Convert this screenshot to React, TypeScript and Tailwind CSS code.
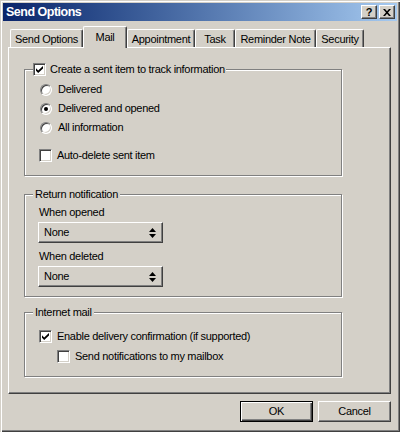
import React from 'react';

const Check = ({ checked = false }: { checked?: boolean }) => (
  <span className="w-[13px] h-[13px] shrink-0 bg-white border border-t-[#808080] border-l-[#808080] border-r-white border-b-white shadow-[inset_1px_1px_0_#404040,inset_-1px_-1px_0_#d4d0c8] flex items-center justify-center">
    {checked && (
      <svg width="7" height="7" viewBox="0 0 7 7">
        <path d="M0 2.2 L2.2 4.4 L7 0 L7 2.6 L2.2 7 L0 4.8 Z" fill="#000" />
      </svg>
    )}
  </span>
);

const Radio = ({ checked = false }: { checked?: boolean }) => (
  <span className="w-[12px] h-[12px] shrink-0 rounded-full bg-white border border-t-[#808080] border-l-[#808080] border-r-white border-b-white shadow-[inset_1px_1px_0_#404040,inset_-1px_-1px_0_#d4d0c8] flex items-center justify-center">
    {checked && <span className="w-[4px] h-[4px] rounded-full bg-black" />}
  </span>
);

const Tab = ({ label, width, active = false }: { label: string; width: string; active?: boolean }) => (
  <div
    className={`${width} ${
      active ? 'h-[22px] -mb-[1px] relative z-10 pt-[4px]' : 'h-[18px] pt-[3px]'
    } bg-[#d4d0c8] border-l border-t border-r border-l-white border-t-white border-r-[#404040] shadow-[inset_-1px_0_0_#808080] rounded-t-[2px] text-center leading-[13px] whitespace-nowrap`}
  >
    {label}
  </div>
);

const Select = () => (
  <div className="w-[125px] h-[21px] bg-[#d4d0c8] border border-t-white border-l-white border-r-[#404040] border-b-[#404040] shadow-[inset_-1px_-1px_0_#808080] flex items-center justify-between pl-[5px] pr-[6px]">
    <span>None</span>
    <svg width="7" height="10" viewBox="0 0 7 10">
      <path d="M3.5 0 L7 4 L0 4 Z M0 6 L7 6 L3.5 10 Z" fill="#000" />
    </svg>
  </div>
);

const Group = ({ legend, className, children }: { legend: React.ReactNode; className: string; children: React.ReactNode }) => (
  <fieldset
    className={`w-[318px] border border-[#808080] shadow-[inset_1px_1px_0_#fff,1px_1px_0_#fff] ${className}`}
  >
    <legend className="ml-[8px] h-[14px] bg-[#d4d0c8] flex items-center">{legend}</legend>
    {children}
  </fieldset>
);

export default function App() {
  return (
    <div className="w-[400px] h-[432px] bg-[#d4d0c8] p-[3px] flex flex-col text-[11px] tracking-[-0.3px] text-black font-['Liberation_Sans',Arial,sans-serif] shadow-[inset_1px_1px_0_#d4d0c8,inset_2px_2px_0_#fff,inset_-1px_-1px_0_#404040,inset_-2px_-2px_0_#808080]">
      {/* title bar */}
      <div className="h-[18px] bg-gradient-to-r from-[#0a246a] to-[#a6caf0] flex items-center justify-between pl-[3px] pr-[2px]">
        <span className="text-white font-bold text-[12.5px] tracking-[-0.5px]">Send Options</span>
        <div className="flex gap-[2px]">
          <div className="w-[16px] h-[14px] bg-[#d4d0c8] border border-t-white border-l-white border-r-[#404040] border-b-[#404040] shadow-[inset_-1px_-1px_0_#808080] flex items-center justify-center font-bold text-[11px] leading-none">
            ?
          </div>
          <div className="w-[16px] h-[14px] bg-[#d4d0c8] border border-t-white border-l-white border-r-[#404040] border-b-[#404040] shadow-[inset_-1px_-1px_0_#808080] flex items-center justify-center">
            <svg width="8" height="7" viewBox="0 0 8 7">
              <path d="M0 0 L2 0 L4 2.3 L6 0 L8 0 L5 3.5 L8 7 L6 7 L4 4.7 L2 7 L0 7 L3 3.5 Z" fill="#000" />
            </svg>
          </div>
        </div>
      </div>

      {/* tabs */}
      <div className="mt-[5px] h-[21px] flex items-end pl-[7px]">
        <Tab label="Send Options" width="w-[73px]" />
        <Tab label="Mail" width="w-[44px]" active />
        <Tab label="Appointment" width="w-[68px]" />
        <Tab label="Task" width="w-[40px]" />
        <Tab label="Reminder Note" width="w-[81px]" />
        <Tab label="Security" width="w-[48px]" />
      </div>

      {/* panel */}
      <div className="ml-[5px] w-[383px] h-[347px] border border-t-white border-l-white border-r-[#404040] border-b-[#404040] shadow-[inset_-1px_-1px_0_#808080] pl-[15px] pt-[14px] flex flex-col">
        <Group
          className="h-[114px]"
          legend={
            <span className="flex items-center gap-[4px] pr-[1px]">
              <Check checked />
              <span>Create a sent item to track information</span>
            </span>
          }
        >
          <div className="pl-[15px] pt-[4px] flex flex-col">
            <label className="h-[19px] flex items-center gap-[6px]">
              <Radio />
              <span>Delivered</span>
            </label>
            <label className="h-[19px] flex items-center gap-[6px]">
              <Radio checked />
              <span>Delivered and opened</span>
            </label>
            <label className="h-[19px] flex items-center gap-[6px]">
              <Radio />
              <span>All information</span>
            </label>
            <label className="mt-[9px] h-[19px] flex items-center gap-[5px] -ml-[1px]">
              <Check />
              <span>Auto-delete sent item</span>
            </label>
          </div>
        </Group>

        <Group className="mt-[11px] h-[110px]" legend={<span className="px-[2px]">Return notification</span>}>
          <div className="pl-[13px] pt-[4px] flex flex-col">
            <div className="h-[14px] flex items-center pl-[1px]">When opened</div>
            <div className="mt-[3px]">
              <Select />
            </div>
            <div className="mt-[6px] h-[14px] flex items-center pl-[1px]">When deleted</div>
            <div className="mt-[3px]">
              <Select />
            </div>
          </div>
        </Group>

        <Group className="mt-[8px] h-[72px]" legend={<span className="px-[2px]">Internet mail</span>}>
          <div className="pl-[14px] pt-[10px] flex flex-col">
            <label className="h-[14px] flex items-center gap-[5px]">
              <Check checked />
              <span>Enable delivery confirmation (if supported)</span>
            </label>
            <label className="mt-[6px] h-[14px] flex items-center gap-[5px] pl-[18px]">
              <Check />
              <span>Send notifications to my mailbox</span>
            </label>
          </div>
        </Group>
      </div>

      {/* buttons */}
      <div className="mt-[7px] flex justify-end gap-[5px] pr-[6px]">
        <button className="w-[73px] h-[21px] bg-[#d4d0c8] border border-black shadow-[inset_1px_1px_0_#fff,inset_-1px_-1px_0_#404040,inset_-2px_-2px_0_#808080] leading-none">
          OK
        </button>
        <button className="w-[73px] h-[21px] bg-[#d4d0c8] border border-t-white border-l-white border-r-[#404040] border-b-[#404040] shadow-[inset_-1px_-1px_0_#808080] leading-none">
          Cancel
        </button>
      </div>
    </div>
  );
}
